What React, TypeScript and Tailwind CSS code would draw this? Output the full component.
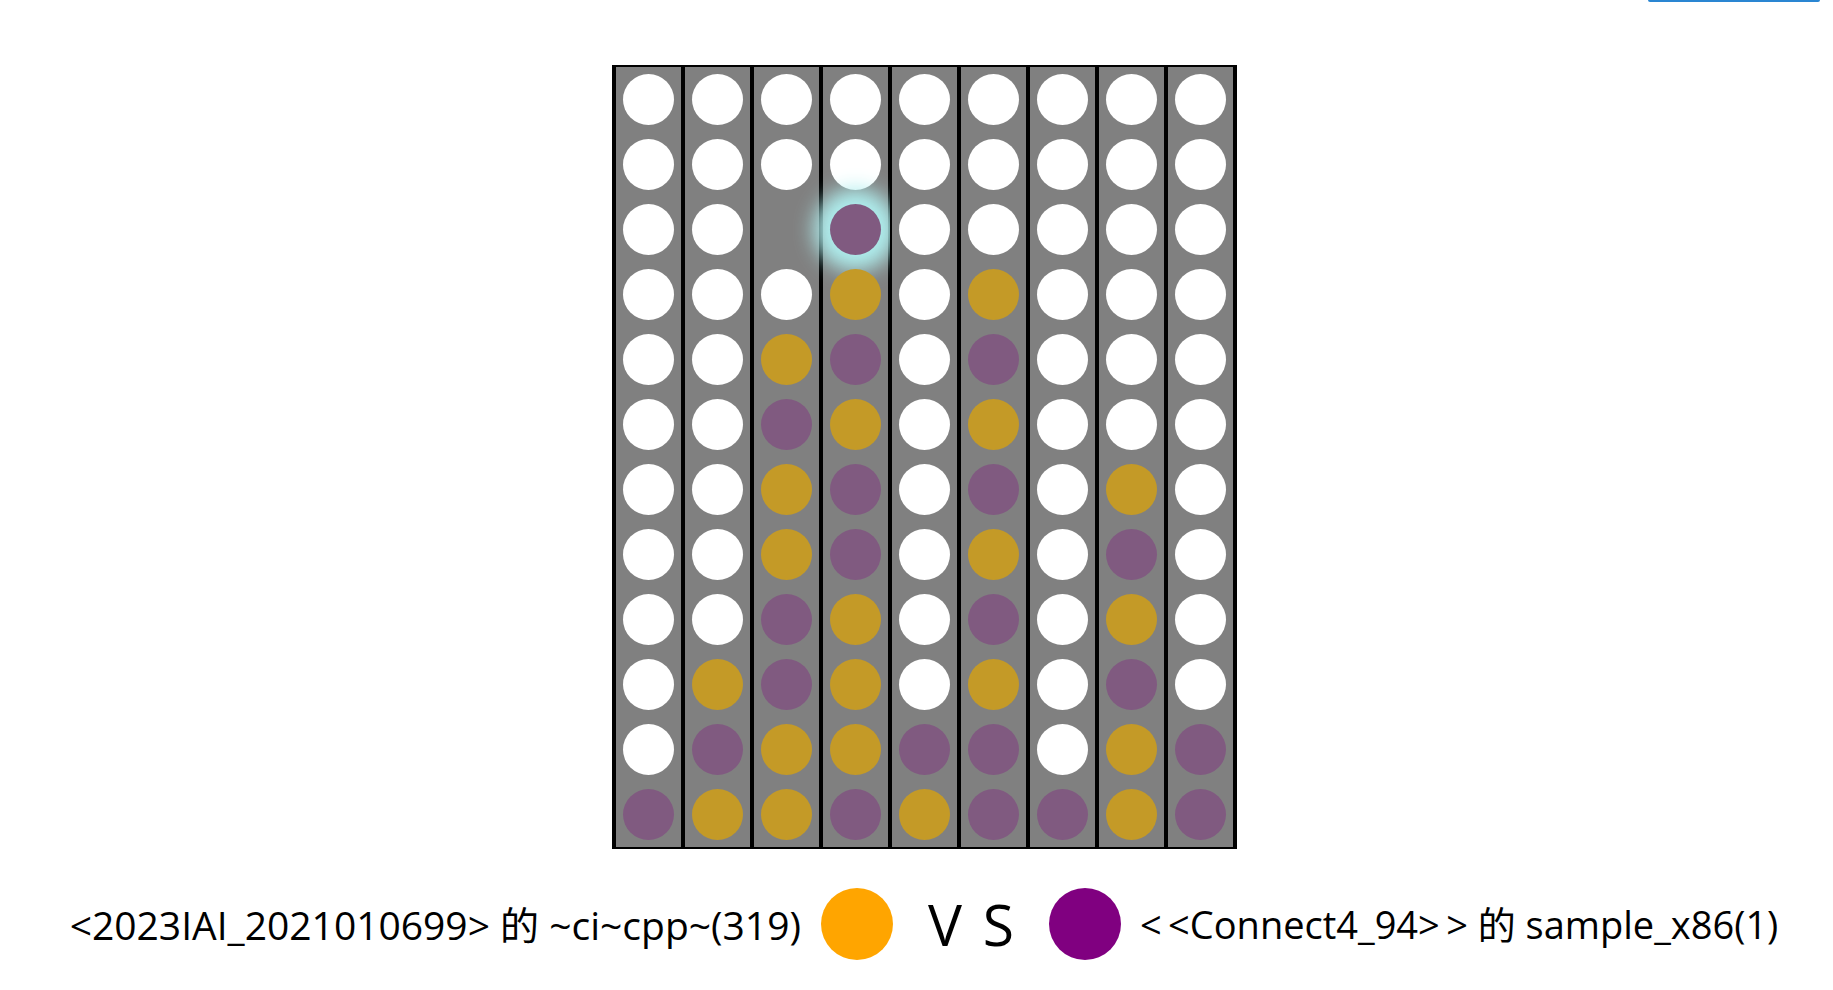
import React from "react";

// W = white (empty), G = gold, P = purple, E = blocked, H = last move
const board = [
  "WWWWWWWWW",
  "WWWWWWWWW",
  "WWEHWWWWW",
  "WWWGWGWWW",
  "WWGPWPWWW",
  "WWPGWGWWW",
  "WWGPWPWGW",
  "WWGPWGWPW",
  "WWPGWPWGW",
  "WGPGWGWPW",
  "WPGGPPWGP",
  "PGGPGPPGP",
];

const font = { fontFamily: '"Open Sans", "Noto Sans CJK SC", sans-serif' };

function Cell({ kind }: { kind: string }) {
  if (kind === "E") return <div className="h-[65px] w-[51px]" />;
  if (kind === "H")
    return (
      <div className="my-[7px] h-[51px] w-[51px] rounded-full bg-[#805a80] shadow-[0_0_20px_16px_#afeeee]" />
    );
  const color = kind === "G" ? "bg-[#c49a27]" : kind === "P" ? "bg-[#805a80]" : "bg-white";
  return <div className={`my-[7px] h-[51px] w-[51px] rounded-full ${color}`} />;
}

export default function App() {
  const cols = Array.from({ length: 9 }, (_, c) => board.map((row) => row[c]));

  return (
    <div className="min-h-screen bg-white" style={font}>
      {/* top button edge */}
      <div className="flex h-[2px] justify-end pr-[13px]">
        <div className="h-[2px] w-[172px] rounded-b-sm bg-[#2a86d2]" />
      </div>

      {/* board */}
      <div className="mt-[63px] flex justify-center pl-[15px]">
        <div className="flex border-2 border-black bg-[#808080]">
          {cols.map((col, c) => (
            <div key={c} className="flex w-[69px] flex-col items-center border-x-2 border-black bg-[#808080]">
              {col.map((k, r) => (
                <Cell key={r} kind={k} />
              ))}
            </div>
          ))}
        </div>
      </div>

      {/* players */}
      <div className="mt-[39px] flex items-center justify-center pl-[15px] leading-none text-black">
        <span className="whitespace-pre text-[39px]">{"<2023IAI_2021010699> 的 ~ci~cpp~(319)"}</span>
        <div className="ml-[20px] h-[72px] w-[72px] shrink-0 rounded-full bg-[#ffa500]" />
        <span className="ml-[35px] mr-[32px] whitespace-pre text-[57px] tracking-[3px]">V S</span>
        <div className="h-[72px] w-[72px] shrink-0 rounded-full bg-[#800080]" />
        <span className="ml-[19px] whitespace-pre text-[38px]">{"<\u2009<Connect4_94>\u2009> 的 sample_x86(1)"}</span>
      </div>
    </div>
  );
}
